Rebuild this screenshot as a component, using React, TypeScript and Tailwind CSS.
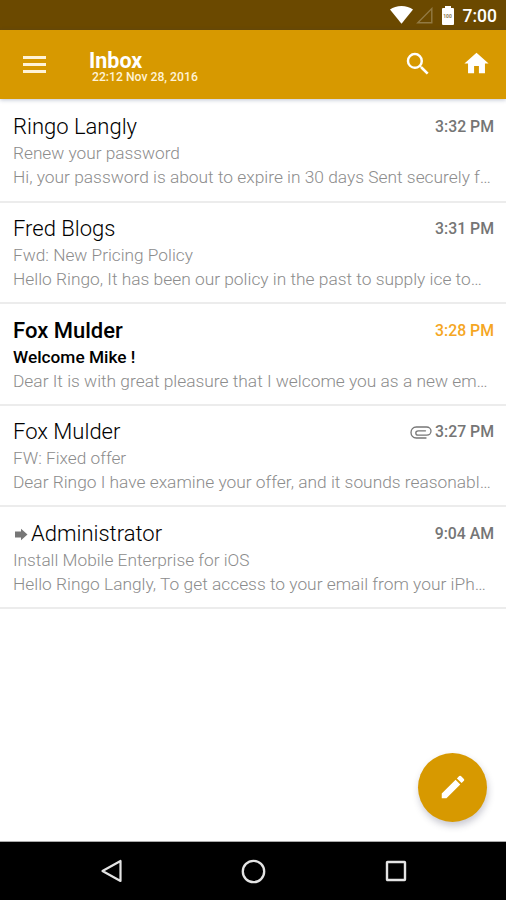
import clsx from 'clsx';

interface Message {
  id: number;
  sender: string;
  subject: string;
  preview: string;
  time: string;
  unread?: boolean;
  attachment?: boolean;
  forwarded?: boolean;
}

const messages: Message[] = [
  {
    id: 1,
    sender: 'Ringo Langly',
    subject: 'Renew your password',
    preview: 'Hi, your password is about to expire in 30 days Sent securely f…',
    time: '3:32 PM',
  },
  {
    id: 2,
    sender: 'Fred Blogs',
    subject: 'Fwd: New Pricing Policy',
    preview: 'Hello Ringo, It has been our policy in the past to supply ice to…',
    time: '3:31 PM',
  },
  {
    id: 3,
    sender: 'Fox Mulder',
    subject: 'Welcome Mike !',
    preview: 'Dear It is with great pleasure that I welcome you as a new em…',
    time: '3:28 PM',
    unread: true,
  },
  {
    id: 4,
    sender: 'Fox Mulder',
    subject: 'FW: Fixed offer',
    preview: 'Dear Ringo I have examine your offer, and it sounds reasonabl…',
    time: '3:27 PM',
    attachment: true,
  },
  {
    id: 5,
    sender: 'Administrator',
    subject: 'Install Mobile Enterprise for iOS',
    preview: 'Hello Ringo Langly, To get access to your email from your iPh…',
    time: '9:04 AM',
    forwarded: true,
  },
];

function StatusBar() {
  return (
    <div className="flex h-[30px] shrink-0 items-center justify-end bg-[#6b4900] pr-[9px] text-white">
      <svg className="mr-[3px] h-[18px] w-[23px]" viewBox="0 0 23 18" fill="currentColor">
        <path d="M0 3.6C3.2 1.2 7 0 11.5 0S19.8 1.2 23 3.6L11.5 17.8z" />
      </svg>
      <svg className="mr-[9px] h-[17px] w-[17px]" viewBox="0 0 17 17" fill="none" stroke="#927a43" strokeWidth="1.4">
        <path d="M1.8 15.7H15.8V1.6z" />
      </svg>
      <div className="mr-[9px] flex flex-col items-center">
        <div className="h-[2px] w-[6px] bg-white" />
        <div className="flex h-[17px] w-[12px] items-center justify-center rounded-[1px] bg-white text-[5px] leading-none font-bold text-[#8d7a50]">
          100
        </div>
      </div>
      <span className="pt-[3px] text-[17.5px] leading-none font-medium">7:00</span>
    </div>
  );
}

function AppBar() {
  return (
    <header className="relative flex h-[69px] shrink-0 items-center bg-[#d79900] pr-[16px] pl-[23px] text-white shadow-[0_1px_4px_rgba(40,60,110,0.3)]">
      <button type="button" aria-label="Menu" className="flex w-[23px] flex-col gap-[4px]">
        <span className="h-[3px] bg-[#fff3d6]" />
        <span className="h-[3px] bg-[#fff3d6]" />
        <span className="h-[3px] bg-[#fff3d6]" />
      </button>
      <div className="ml-[43px] flex flex-1 flex-col pt-[4px]">
        <h1 className="pt-[1px] text-[21.5px] leading-[19px] font-bold">Inbox</h1>
        <span className="pl-[3px] text-[12.2px] leading-[14px] font-medium text-[#fff3d6]">22:12 Nov 28, 2016</span>
      </div>
      <button type="button" aria-label="Search" className="mr-[29px] pb-[2px]">
        <svg className="size-[30px]" viewBox="0 0 24 24" fill="currentColor">
          <path d="M15.5 14h-.79l-.28-.27A6.471 6.471 0 0 0 16 9.5 6.5 6.5 0 1 0 9.5 16c1.61 0 3.09-.59 4.23-1.57l.27.28v.79l5 4.99L20.49 19l-4.99-5zm-6 0C7.01 14 5 11.99 5 9.5S7.01 5 9.5 5 14 7.01 14 9.5 11.99 14 9.5 14z" />
        </svg>
      </button>
      <button type="button" aria-label="Home" className="-mr-[1px] pb-[2px]">
        <svg className="size-[29px]" viewBox="0 0 24 24" fill="currentColor">
          <path d="M10 20v-6h4v6h5v-8h3L12 3 2 12h3v8z" />
        </svg>
      </button>
    </header>
  );
}

function ForwardedIcon() {
  return (
    <svg className="mt-[2px] mr-[3px] ml-[2px] h-[13px] w-[13px]" viewBox="0 0 13 13" fill="#777">
      <path d="M0 3.6H6V.8L12.5 6.5 6 12.2V9.4H0z" />
    </svg>
  );
}

function AttachmentIcon() {
  return (
    <svg
      className="mr-[3px] h-[13px] w-[22px]"
      viewBox="0 0 22 13"
      fill="none"
      stroke="#777"
      strokeWidth="1.3"
      strokeLinecap="round"
    >
      <path d="M16 12H6.3C3 12 1 9.5 1 6.5S3 1 6.3 1h10.2C19 1 21 2.7 21 5s-1.8 4.2-4.3 4.2H8.2C6.8 9.2 5.8 8.3 5.8 7s1-2.2 2.4-2.2H15.5" />
    </svg>
  );
}

function MessageRow({ message }: { message: Message }) {
  const { sender, subject, preview, time, unread, attachment, forwarded } = message;
  return (
    <li className="flex h-[101.6px] flex-col border-b-2 border-[#ececec] pt-[12.4px] pr-[12px] pl-[13px]">
      <div className="flex h-[28px] items-center">
        {forwarded && <ForwardedIcon />}
        <span
          className={clsx(
            'flex-1 text-[22px] leading-[28px] text-black',
            unread ? 'font-medium' : 'font-light',
          )}
        >
          {sender}
        </span>
        {attachment && <AttachmentIcon />}
        <span
          className={clsx(
            'text-[15.8px] leading-[28px] font-medium',
            unread ? 'text-[#f5a623]' : 'text-[#757575]',
          )}
        >
          {time}
        </span>
      </div>
      <div
        className={clsx(
          'text-[17.25px] leading-[25px]',
          unread ? 'font-medium text-black' : 'font-light text-[#8c8c8c]',
        )}
      >
        {subject}
      </div>
      <div className="text-[17.35px] leading-[23px] font-light whitespace-nowrap text-[#8c8c8c]">{preview}</div>
    </li>
  );
}

function NavigationBar() {
  return (
    <nav className="flex h-[58px] shrink-0 items-center justify-between bg-black pr-[99px] pl-[100px]">
      <svg className="h-[24px] w-[22px]" viewBox="0 0 22 24" fill="none" stroke="#e4e4e4" strokeWidth="2.2">
        <path d="M20.5 2V22L2.5 12z" strokeLinejoin="round" />
      </svg>
      <svg className="size-[25px]" viewBox="0 0 25 25" fill="none" stroke="#e4e4e4" strokeWidth="2.3">
        <circle cx="12.5" cy="12.5" r="10.7" />
      </svg>
      <svg className="size-[22px]" viewBox="0 0 22 22" fill="none" stroke="#e4e4e4" strokeWidth="2.4">
        <rect x="2" y="2" width="18" height="18" rx="0.5" />
      </svg>
    </nav>
  );
}

export default function App() {
  return (
    <div className="flex h-[900px] w-[506px] flex-col overflow-hidden bg-white font-['Roboto',sans-serif]">
      <StatusBar />
      <AppBar />
      <main className="relative flex-1 border-b border-[#aaa]">
        <ul className="pt-[2px]">
          {messages.map(message => (
            <MessageRow key={message.id} message={message} />
          ))}
        </ul>
        <button
          type="button"
          aria-label="Compose"
          className="absolute right-[19px] bottom-[19px] flex size-[69px] items-center justify-center rounded-full bg-[#d79900] pb-[2px] text-white shadow-[1px_4px_7px_rgba(40,40,70,0.25)]"
        >
          <svg className="size-[30px]" viewBox="0 0 24 24" fill="currentColor">
            <path d="M3 17.25V21h3.75L17.81 9.94l-3.75-3.75L3 17.25zM20.71 7.04a1 1 0 0 0 0-1.41l-2.34-2.34a1 1 0 0 0-1.41 0l-1.83 1.83 3.75 3.75 1.83-1.83z" />
          </svg>
        </button>
      </main>
      <NavigationBar />
    </div>
  );
}
